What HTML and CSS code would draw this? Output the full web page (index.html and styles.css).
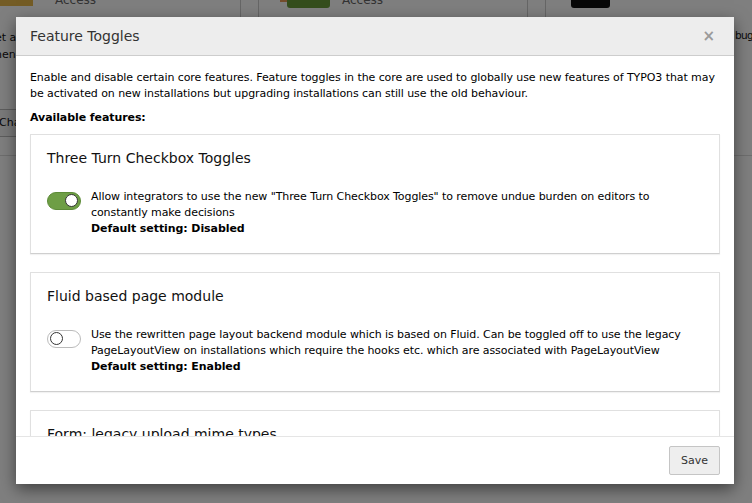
FILE: index.html
```html
<!DOCTYPE html>
<html>
<head>
<meta charset="utf-8">
<link rel="stylesheet" href="styles.css">
</head>
<body>
<div class="page">
  <div class="bg-row">
    <div class="bg-card bg-card-a"><span class="bg-gold"></span><span class="bg-access">Access</span></div>
    <div class="bg-card bg-card-b"><span class="bg-orange"></span><span class="bg-green"></span><span class="bg-access">Access</span></div>
    <div class="bg-card bg-card-c"><span class="bg-dark"></span></div>
  </div>
  <div class="bg-text">
    <div class="bg-left">et a<br>hen</div>
    <div class="bg-right">bug</div>
  </div>
  <div class="bg-btn">Cha</div>
</div>
<div class="overlay"></div>
<div class="modal">
  <div class="modal-header">
    <h4 class="modal-title">Feature Toggles</h4>
    <span class="close">×</span>
  </div>
  <div class="modal-body">
    <p class="intro">Enable and disable certain core features. Feature toggles in the core are used to globally use new features of TYPO3 that may be activated on new installations but upgrading installations can still use the old behaviour.</p>
    <p class="avail">Available features:</p>
    <div class="card">
      <h3 class="card-title">Three Turn Checkbox Toggles</h3>
      <div class="row">
        <span class="toggle on"><span class="knob"></span></span>
        <div class="desc">Allow integrators to use the new "Three Turn Checkbox Toggles" to remove undue burden on editors to constantly make decisions<br><b>Default setting: Disabled</b></div>
      </div>
    </div>
    <div class="card">
      <h3 class="card-title">Fluid based page module</h3>
      <div class="row">
        <span class="toggle off"><span class="knob"></span></span>
        <div class="desc">Use the rewritten page layout backend module which is based on Fluid. Can be toggled off to use the legacy PageLayoutView on installations which require the hooks etc. which are associated with PageLayoutView<br><b>Default setting: Enabled</b></div>
      </div>
    </div>
    <div class="card">
      <h3 class="card-title">Form: legacy upload mime types</h3>
      <div class="row">
        <span class="toggle off"><span class="knob"></span></span>
        <div class="desc">Use legacy upload mime types.<br><b>Default setting: Enabled</b></div>
      </div>
    </div>
  </div>
  <div class="modal-footer">
    <button class="btn">Save</button>
  </div>
</div>
</body>
</html>
```
FILE: styles.css
```css
html, body {
  margin: 0;
  padding: 0;
  width: 752px;
  height: 503px;
  overflow: hidden;
  font-family: "DejaVu Sans", Verdana, sans-serif;
  font-size: 11px;
  color: #000;
}
.page {
  background: #fff;
  height: 503px;
  color: #111;
}
.bg-row {
  display: flex;
  height: 155px;
  border-bottom: 1px solid #ddd;
}
.bg-card {
  border-right: 1px solid #ccc;
  position: relative;
}
.bg-card-a { width: 240px; }
.bg-card-b { width: 268px; margin-left: 17px; border-left: 1px solid #ccc; }
.bg-card-c { flex: 1; margin-left: 17px; border-left: 1px solid #ccc; border-right: 0; }
.bg-gold {
  position: absolute; left: 0; top: 0; width: 33px; height: 6px; background: #e9b94a;
}
.bg-orange {
  position: absolute; left: 21px; top: 0; width: 8px; height: 2px; background: #e89a5a;
}
.bg-green {
  position: absolute; left: 28px; top: 0; width: 43px; height: 8px; background: #6a9c3b;
  border-radius: 0 0 3px 3px;
}
.bg-dark {
  position: absolute; left: 25px; top: 0; width: 39px; height: 8px; background: #111;
  border-radius: 0 0 3px 3px;
}
.bg-access {
  position: absolute; left: 55px; top: -7px; color: #666; font-size: 12px;
}
.bg-card-b .bg-access { left: 83px; }
.bg-text { position: absolute; top: 29px; left: -5px; width: 764px; }
.bg-left { position: absolute; left: 0; top: 0; line-height: 17px; font-size: 11px; }
.bg-right { position: absolute; left: 740px; top: 0; font-size: 10.5px; letter-spacing: -0.6px; }
.bg-btn {
  position: absolute; left: -12px; top: 109px; width: 40px; height: 26px; line-height: 26px;
  border: 1px solid #bbb; background: #f4f4f4; padding-left: 10px;
}
.overlay {
  position: absolute; inset: 0; background: rgba(0,0,0,0.5);
}
.modal {
  position: absolute;
  left: 16px;
  top: 17px;
  width: 718px;
  height: 467px;
  background: #fff;
  display: flex;
  flex-direction: column;
  box-shadow: 0 5px 15px rgba(0,0,0,0.5);
}
.modal-header {
  height: 38px;
  background: #ededed;
  border-bottom: 1px solid #cdcdcd;
  display: flex;
  align-items: center;
  justify-content: space-between;
  padding: 0 19px 0 14px;
  flex: none;
}
.modal-title {
  margin: 0;
  font-weight: normal;
  font-size: 14px;
  color: #333;
}
.close {
  font-size: 15px;
  font-weight: bold;
  color: #9a9a9a;
  line-height: 1;
}
.modal-body {
  flex: 1;
  overflow: hidden;
  padding: 14px 14px 0 14px;
  letter-spacing: -0.08px;
}
.intro {
  margin: 0 0 8px;
  line-height: 16px;
}
.avail {
  margin: 0 0 8px;
  font-weight: bold;
  line-height: 16px;
}
.card {
  border: 1px solid #e0e0e0;
  border-bottom-color: #cfcfcf;
  box-shadow: 0 1px 1px rgba(0,0,0,0.05);
  padding: 13px 16px 16px;
  margin-bottom: 18px;
}
.card-title {
  margin: 0 0 21px;
  font-weight: normal;
  font-size: 14px;
  line-height: 20px;
  color: #111;
  letter-spacing: 0;
}
.row {
  display: flex;
  align-items: flex-start;
}
.desc {
  line-height: 16px;
  margin-left: 10px;
}
.toggle {
  flex: none;
  width: 32px;
  height: 16px;
  border-radius: 9px;
  margin-top: 3px;
  position: relative;
  box-sizing: content-box;
}
.toggle.on {
  background: #6e9e45;
  border: 1px solid #5d8b38;
}
.toggle.off {
  background: #fff;
  border: 1px solid #bbb;
}
.knob {
  position: absolute;
  top: 1px;
  width: 11px;
  height: 11px;
  border-radius: 50%;
  background: #fff;
  border: 1.5px solid #333;
}
.toggle.on .knob { right: 2px; }
.toggle.off .knob { left: 2px; }
.modal-footer {
  flex: none;
  height: 47px;
  border-top: 1px solid #e5e5e5;
  display: flex;
  align-items: center;
  justify-content: flex-end;
  padding: 0 14px;
  background: #fff;
}
.btn {
  font-family: "DejaVu Sans", Verdana, sans-serif;
  font-size: 11px;
  color: #333;
  background: #eee;
  border: 1px solid #c5c5c5;
  border-radius: 2px;
  width: 51px;
  height: 29px;
  padding: 0;
}
```
